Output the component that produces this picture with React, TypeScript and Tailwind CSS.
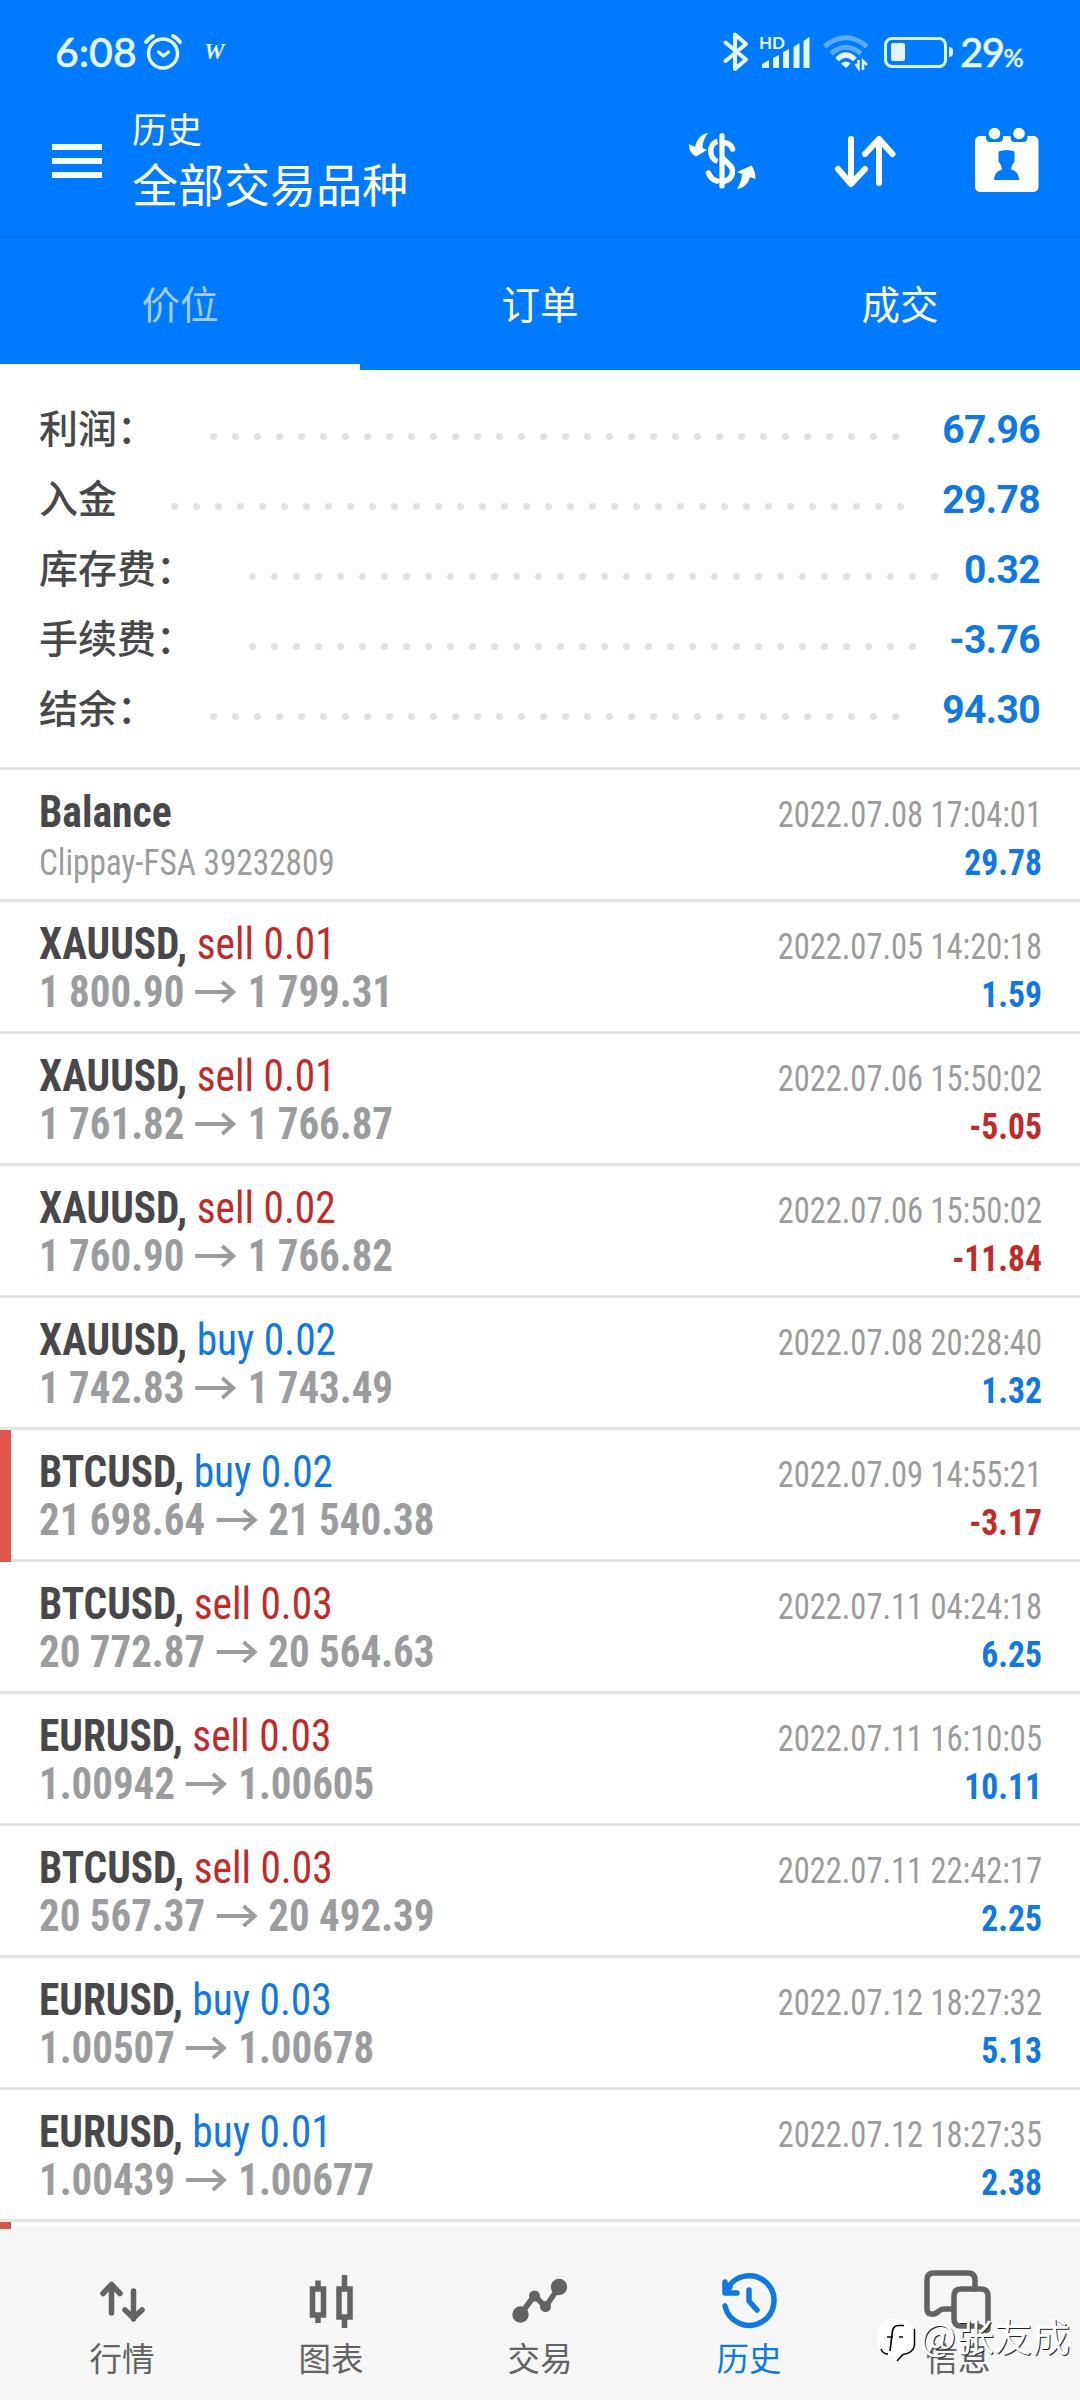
import React from 'react';

const summary = [
    { label: '利润：', value: '67.96', dots: 32 },
    { label: '入金', value: '29.78', dots: 34 },
    { label: '库存费：', value: '0.32', dots: 32 },
    { label: '手续费：', value: '-3.76', dots: 31 },
    { label: '结余：', value: '94.30', dots: 32 },
];

const deals = [
    { symbol: 'XAUUSD', side: 'sell', lot: '0.01', open: '1 800.90', close: '1 799.31', date: '2022.07.05 14:20:18', profit: '1.59' },
    { symbol: 'XAUUSD', side: 'sell', lot: '0.01', open: '1 761.82', close: '1 766.87', date: '2022.07.06 15:50:02', profit: '-5.05' },
    { symbol: 'XAUUSD', side: 'sell', lot: '0.02', open: '1 760.90', close: '1 766.82', date: '2022.07.06 15:50:02', profit: '-11.84' },
    { symbol: 'XAUUSD', side: 'buy', lot: '0.02', open: '1 742.83', close: '1 743.49', date: '2022.07.08 20:28:40', profit: '1.32' },
    { symbol: 'BTCUSD', side: 'buy', lot: '0.02', open: '21 698.64', close: '21 540.38', date: '2022.07.09 14:55:21', profit: '-3.17', marked: true },
    { symbol: 'BTCUSD', side: 'sell', lot: '0.03', open: '20 772.87', close: '20 564.63', date: '2022.07.11 04:24:18', profit: '6.25' },
    { symbol: 'EURUSD', side: 'sell', lot: '0.03', open: '1.00942', close: '1.00605', date: '2022.07.11 16:10:05', profit: '10.11' },
    { symbol: 'BTCUSD', side: 'sell', lot: '0.03', open: '20 567.37', close: '20 492.39', date: '2022.07.11 22:42:17', profit: '2.25' },
    { symbol: 'EURUSD', side: 'buy', lot: '0.03', open: '1.00507', close: '1.00678', date: '2022.07.12 18:27:32', profit: '5.13' },
    { symbol: 'EURUSD', side: 'buy', lot: '0.01', open: '1.00439', close: '1.00677', date: '2022.07.12 18:27:35', profit: '2.38' },
];

function StatusBar() {
    return (
        <div className="flex h-[104px] items-center justify-between pl-[55px] pr-[55px] font-['Lato',sans-serif] text-[#e4f6ff]">
            <div className="flex items-center">
                <span className="w-[82px] text-[41px] leading-[48px] font-medium [-webkit-text-stroke:0.5px_#e4f6ff]">6:08</span>
                <svg className="ml-[5px]" width="42" height="40" viewBox="142 32 42 40" fill="none" stroke="currentColor" strokeLinecap="round" strokeLinejoin="round">
                    <circle cx="163" cy="53.5" r="14.5" strokeWidth="3.5" />
                    <path d="M146 42q3-4 7-6M180 42q-3-4-7-6" strokeWidth="4" />
                    <path d="M158.500 52l5 4 5-4" strokeWidth="3.500" />
                </svg>
                <span className="ml-[20px] w-6 font-['Liberation_Serif',serif] text-[23px] leading-[28px] font-bold italic">W</span>
            </div>
            <div className="flex items-center">
                <svg width="26" height="42" viewBox="723 31 26 42" fill="none" stroke="currentColor" strokeWidth="4" strokeLinecap="round" strokeLinejoin="round">
                    <path d="M725.500 42.500L746 59.500l-11 9.500V34.500l11 9.500-20.500 17" />
                </svg>
                <svg className="ml-[10px]" width="52" height="40" viewBox="759 32 52 40" fill="currentColor">
                    <text x="759" y="48.500" fontSize="17" fontWeight="700" fontFamily="Lato, sans-serif">HD</text>
                    <path d="M762 64l7-4v8h-7zM773 58l6-3v13h-6zM783 52l6-3v19h-6zM793.500 47l6-4v25h-6zM803.500 41l6-4v31h-6z" />
                </svg>
                <svg className="ml-[12px]" width="46" height="40" viewBox="823 33 46 40" fill="none" stroke="currentColor" strokeWidth="5">
                    <path d="M824.500 47.500Q846 30 867 47.500" opacity="0.4" />
                    <path d="M831 54.500Q846 42 861 54.500" opacity="0.4" />
                    <path d="M837 60.500Q846 51.500 855 60.500" />
                    <path d="M841 64.500Q846 60.500 850.500 64.500L846 69z" fill="currentColor" stroke="none" />
                    <path d="M858.500 61v8l-3-4M863 71v-9l4 4" strokeWidth="2.500" />
                </svg>
                <div className="ml-[15px] flex h-[31px] w-[63px] items-center rounded-[8px] border-[3px] border-[#d8f2ff] pl-[4px]">
                    <div className="h-[18px] w-[14px] rounded-xs bg-[#e4f3ff]"></div>
                </div>
                <div className="ml-[2px] h-[10px] w-[4px] rounded-r-sm bg-[#d8f2ff]"></div>
                <div className="ml-[7px] flex w-[65px] items-baseline whitespace-nowrap [-webkit-text-stroke:0.5px_#e4f6ff]">
                    <span className="text-[40px] leading-[48px] font-medium tracking-[-1.5px]">29</span>
                    <span className="text-[25px] font-medium">%</span>
                </div>
            </div>
        </div>
    );
}

function TitleBar() {
    return (
        <div className="flex h-[134px] border-b-2 border-[#0071ec] pl-[52px] text-white">
            <div className="mt-[40px] flex w-[50px] flex-col gap-[8px]">
                <div className="h-[6px] bg-[#f2fdff]"></div>
                <div className="h-[6px] bg-[#f2fdff]"></div>
                <div className="h-[6px] bg-[#f2fdff]"></div>
            </div>
            <div className="ml-[30px] w-[553px] font-['Noto_Sans_CJK_SC',sans-serif]">
                <h3 className="text-[35px] leading-[48px]">历史</h3>
                <h3 className="text-[46px] leading-[61px]">全部交易品种</h3>
            </div>
            <svg className="mt-[24px]" width="74" height="66" viewBox="685 128 74 66" fill="none" stroke="white" strokeLinecap="round">
                <path d="M722 135.500v50.500" strokeWidth="5.200" />
                <path d="M717.500 141.500c-9 2-9 17 0 20" strokeWidth="5.500" strokeLinecap="butt" />
                <path d="M724 142.500q7 1 8.500 6.500M708.500 173q2.500 6.500 8.500 8" strokeWidth="5.500" />
                <path d="M723 158.500q5 5 5 5c7 5 6 16-5 18" strokeWidth="5.500" />
                <path d="M708 133c-7 1-11 6-13 14l-6-3c0 5 1 9 7 12.500l11-6.500-4.500-2c0-6 2-10 5.500-15zM737 189c7-1 11-5 13-12l5.500 2c0-5-1-9-4-13.500l-14.500 6.500 5 2c0 5-2 10-5 15z" fill="white" stroke="none" />
            </svg>
            <svg className="ml-[74px] mt-[26px]" width="64" height="64" viewBox="833 130 64 64" fill="none" stroke="white" strokeWidth="6" strokeLinecap="round" strokeLinejoin="round">
                <path d="M851 139v45M838 169l13 15 14-15M879 183v-44M865 154l14-15 13.500 15" />
            </svg>
            <svg className="ml-[74px] mt-[22px]" width="72" height="68" viewBox="971 126 72 68">
                <rect x="975" y="136" width="63.500" height="56" rx="5" fill="white" />
                <path d="M986 134h17v3q0 5-4 5h-9q-4 0-4-5zM1010.500 134h17v3q0 5-4 5h-9q-4 0-4-5z" fill="#007aff" />
                <circle cx="994.500" cy="133.500" r="5.800" fill="white" />
                <circle cx="1019" cy="133.500" r="5.800" fill="white" />
                <path d="M998.500 151.500q8-3 16 0v10q-3 3-3.500 8 8 2 8 10.500h-25q0-8.500 8-10.500-.5-5-3.500-8z" fill="#007aff" />
            </svg>
        </div>
    );
}

function Tabs() {
    return (
        <div className="grid h-[132px] grid-cols-3 text-center font-['Noto_Sans_CJK_SC',sans-serif] text-[38.5px] leading-[122px] text-white">
            <div className="border-b-[6px] border-white pt-[3px] text-[#a5cdfb]">价位</div>
            <div className="pt-[3px]">订单</div>
            <div className="pt-[3px]">成交</div>
        </div>
    );
}

function Summary() {
    return (
        <div className="border-b-[3px] border-[#e4e4e4] pt-[23px] pr-[40px] pb-[24px] pl-[39px]">
            {summary.map((row) => (
                <div key={row.label} className="flex h-[70px] items-center">
                    <span className="pb-[4px] font-['Noto_Sans_CJK_SC',sans-serif] text-[39px] leading-[62px] font-medium text-[#48484a]">{row.label}</span>
                    <div className="mt-[17px] ml-[54px] flex gap-[15px]">
                        {Array.from({ length: row.dots }, (_, i) => (
                            <div key={i} className="size-[7px] rounded-full bg-[#e2e2e3]"></div>
                        ))}
                    </div>
                    <span className="ml-auto pt-[4px] font-['Roboto',sans-serif] text-[39px] leading-[66px] font-bold tracking-[-0.6px] text-[#0f78e2]">{row.value}</span>
                </div>
            ))}
        </div>
    );
}

function Row({ marked, children }: { marked?: boolean; children: React.ReactNode }) {
    return (
        <div className="flex h-[132px]">
            <div className={marked ? 'w-[11px] bg-[#de574a]' : 'w-[11px] border-b-[3px] border-[#e4e4e4]'}></div>
            <div className="flex flex-1 justify-between border-b-[3px] border-[#e4e4e4] pr-[38px] pl-[28px] whitespace-nowrap">
                {children}
            </div>
        </div>
    );
}

function RowRight({ date, profit }: { date: string; profit: string }) {
    return (
        <div className="pt-[21px] text-right text-[36.5px] leading-[48px]">
            <div className="origin-right scale-x-[0.89] text-[#9b9c9e]">{date}</div>
            <div className={profit.startsWith('-') ? 'origin-right scale-x-[0.92] font-bold text-[#c22a2a]' : 'origin-right scale-x-[0.92] font-bold text-[#0f78e2]'}>{profit}</div>
        </div>
    );
}

function DealList() {
    return (
        <div className="font-['Roboto_Condensed','Roboto',sans-serif] [font-stretch:75%]">
            <Row>
                <div className="pt-[18px]">
                    <h3 className="origin-left scale-x-[0.925] text-[45px] leading-[48px] font-bold text-[#48484a]">Balance</h3>
                    <h3 className="origin-left scale-x-[0.91] text-[36.5px] leading-[54px] text-[#9b9c9e]">Clippay-FSA 39232809</h3>
                </div>
                <RowRight date="2022.07.08 17:04:01" profit="29.78" />
            </Row>
            {deals.map((deal) => (
                <Row key={deal.date + deal.open} marked={deal.marked}>
                    <div className="origin-left scale-x-[0.93] pt-[18px] text-[44.5px] leading-[48px]">
                        <div>
                            <span className="font-bold text-[#48484a]">{deal.symbol},</span>{' '}
                            <span className={deal.side === 'sell' ? 'text-[#c22a2a]' : 'text-[#0f78e2]'}>
                                {deal.side} {deal.lot}
                            </span>
                        </div>
                        <div className="flex items-center text-[44px] font-bold text-[#9b9c9e]">
                            <span>{deal.open}</span>
                            <svg className="mr-[10px] ml-[11px]" width="47" height="24" viewBox="0 0 47 24" fill="none" stroke="currentColor" strokeWidth="4">
                                <path d="M1 12h42M30 2l12 10-12 10" />
                            </svg>
                            <span>{deal.close}</span>
                        </div>
                    </div>
                    <RowRight date={deal.date} profit={deal.profit} />
                </Row>
            ))}
            {/* top edge of the next row, cut by the navigation bar */}
            <div className="flex h-[7px]">
                <div className="w-[11px] bg-[#cf574c]"></div>
                <div className="flex-1 border-t-[4px] border-white bg-[#f6f6f6]"></div>
            </div>
        </div>
    );
}

function NavItem({ label, active, children }: { label: string; active?: boolean; children: React.ReactNode }) {
    return (
        <div className={active ? 'flex w-[209px] flex-col items-center text-[#0f78e2]' : 'flex w-[209px] flex-col items-center text-[#636363]'}>
            <svg width="70" height="70" viewBox="0 0 70 70" fill="none" stroke="currentColor" strokeWidth="5.500" strokeLinecap="round" strokeLinejoin="round">
                {children}
            </svg>
            <span className="text-[32.5px] leading-[42px]">{label}</span>
        </div>
    );
}

function BottomNav() {
    return (
        <div className="flex h-[171px] justify-center bg-[#f6f6f6] pt-[37px] font-['Noto_Sans_CJK_SC',sans-serif]">
            <NavItem label="行情">
                <path d="M24.500 47V19M16 27.500l8.500-9 8.500 9M46.500 25v28M38 44l8.500 8 8.500-8" />
            </NavItem>
            <NavItem label="图表">
                <g strokeLinecap="butt" strokeLinejoin="miter">
                    <path d="M16.500 23h11v26h-11zM22 14.500V23M22 49v8M43 23h11v28H43zM48.500 9v14M48.500 51v11" />
                </g>
            </NavItem>
            <NavItem label="交易">
                <path d="M15.500 48.500l14-19 11 11.500 13.500-20" />
                <g fill="currentColor" stroke="none">
                    <circle cx="15.500" cy="48.500" r="8.200" />
                    <circle cx="29.500" cy="30" r="5.500" />
                    <circle cx="40.500" cy="40.500" r="5.500" />
                    <circle cx="54" cy="21" r="8.200" />
                </g>
            </NavItem>
            <NavItem label="历史" active>
                <path d="M11 40A24.800 24.800 0 1 0 13 23.500M11 16v11h12M12 26l4-5M35 24v11l8 9" />
            </NavItem>
            <NavItem label="信息">
                <path d="M29 43h-8q-3 0-5 2c-4 4-12 5-12-2V14q0-7 7-7h34q7 0 7 7v9" />
                <path d="M38 23h20q7 0 7 7v33c0 2-4 2-6-1q-2-2-5-2H38q-7 0-7-7V30q0-7 7-7z" />
            </NavItem>
        </div>
    );
}

function Watermark() {
    return (
        <div className="absolute right-[10px] bottom-[35px] flex items-start gap-[3px] font-['Noto_Sans_CJK_SC',sans-serif]">
            <svg width="40" height="46" viewBox="0 0 40 46">
                <path d="M4 5Q11-2 19 1q17-2 18 12v13q-2 9-11 10l-7 6-3-5C6 37 1 31 0 22q-1-10 4-17z" fill="white" />
                <path d="M37.500 10v16q-1 8-11.500 9.500l-6 6.500M4 30q2 5 7 5" fill="none" stroke="black" strokeWidth="1.500" />
                <path d="M13 32l2.500-20q1-5.500 6-5.500H27M10 18h6M22 18h4" fill="none" stroke="black" strokeWidth="1.700" />
            </svg>
            <span className="mt-[-9px] text-[38px] leading-[50px] text-white [text-shadow:1px_1px_0_#222]">@张友成</span>
        </div>
    );
}

export default function App() {
    return (
        <div className="relative h-[2400px] w-[1080px] overflow-hidden bg-white">
            <div className="bg-[#007aff]">
                <StatusBar />
                <TitleBar />
                <Tabs />
            </div>
            <Summary />
            <DealList />
            <BottomNav />
            <Watermark />
        </div>
    );
}
